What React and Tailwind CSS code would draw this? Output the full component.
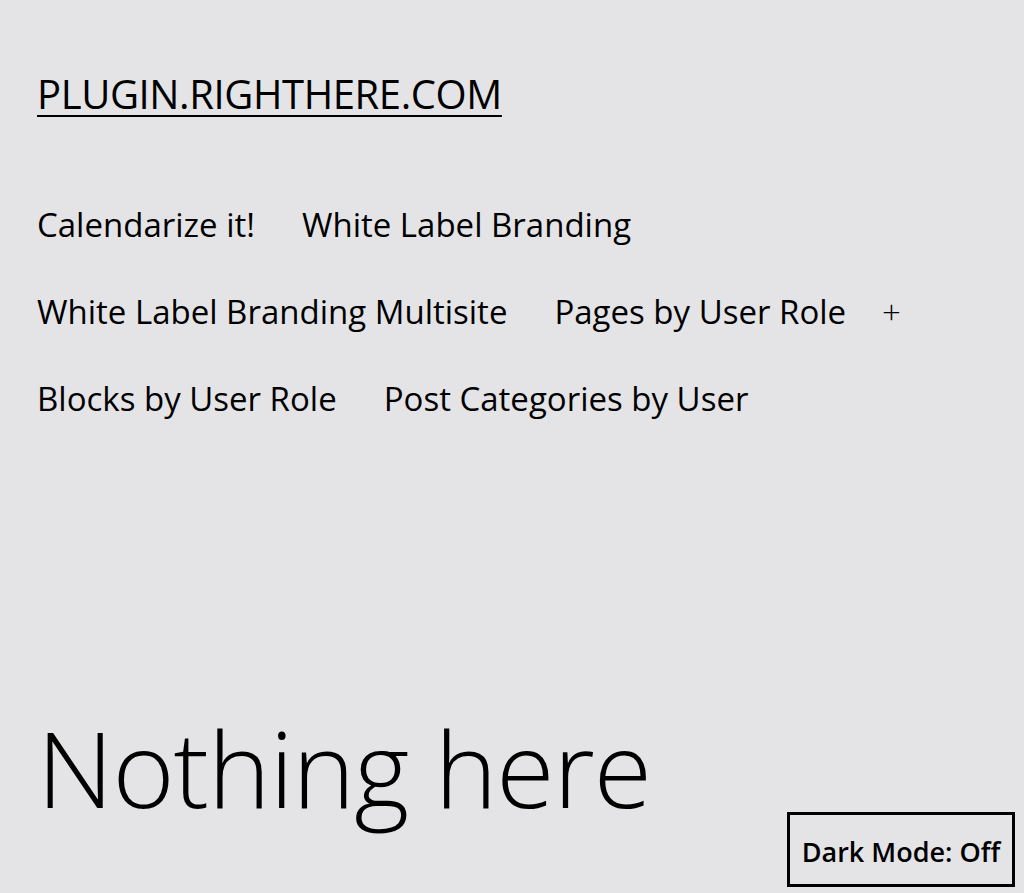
import { useState } from 'react';

const links = [
  { label: 'Calendarize it!' },
  { label: 'White Label Branding' },
  { label: 'White Label Branding Multisite' },
  { label: 'Pages by User Role', sub: true },
  { label: 'Blocks by User Role' },
  { label: 'Post Categories by User' },
];

const App = () => {
  const [dark, setDark] = useState(false);

  return (
    <div
      className="min-h-screen bg-[#e4e4e7] text-black"
      style={{ fontFamily: '"Open Sans", "Noto Sans", sans-serif' }}
    >
      <div className="px-[37px] pt-[70px]">
        <header>
          <a href="#" className="text-[40px] leading-[48px] underline underline-offset-[6px] decoration-2 tracking-[-0.4px]">
            PLUGIN.RIGHTHERE.COM
          </a>
        </header>

        {/* Main navigation */}
        <nav className="mt-[85px] max-w-[920px]">
          <ul className="flex flex-wrap gap-x-[47px] gap-y-[43px]">
            {links.map((link) => (
              <li key={link.label} className="flex items-center gap-[36px] text-[33px] leading-[44px]">
                <a href="#">{link.label}</a>
                {link.sub && <span className="text-[33px] font-light">+</span>}
              </li>
            ))}
          </ul>
        </nav>

        <main className="mt-[286px]">
          <h1 className="text-[106px] leading-[120px] font-light tracking-[-1px]">Nothing here</h1>
        </main>
      </div>

      <button
        onClick={() => setDark(!dark)}
        className="fixed right-[9px] bottom-[6px] w-[228px] h-[75px] pt-[5px] border-[3px] border-black bg-[#e4e4e7] text-[27px] font-semibold"
      >
        Dark Mode: {dark ? 'On' : 'Off'}
      </button>
    </div>
  );
};

export default App;
